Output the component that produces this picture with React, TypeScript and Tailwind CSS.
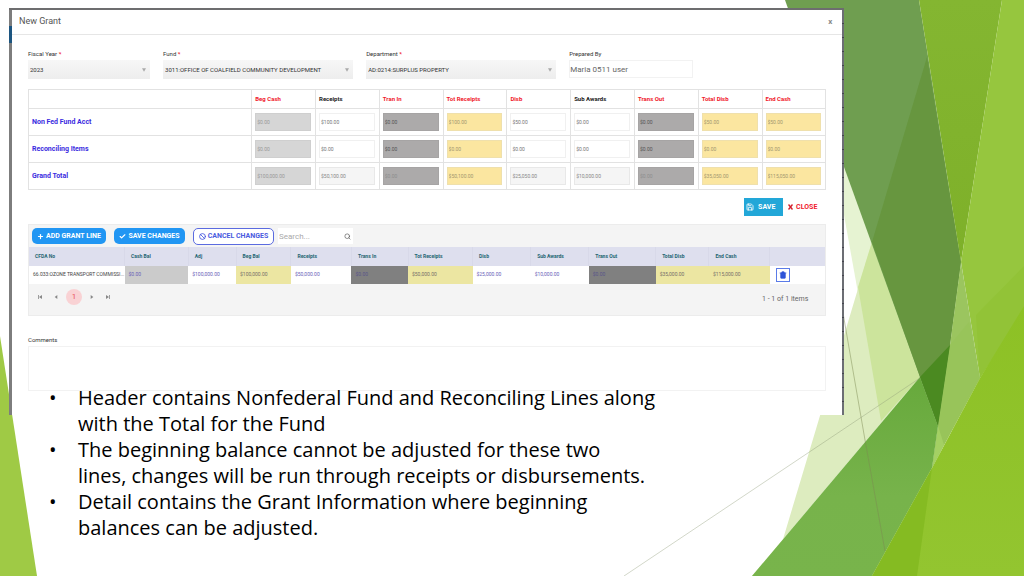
import React from "react";
import { Check, Plus, Ban, Save, Search, Trash2 } from "lucide-react";

const headerColumns = [
  { label: "Beg Cash", color: "text-[#f0202c]" },
  { label: "Receipts", color: "text-[#222]" },
  { label: "Tran In", color: "text-[#f0202c]" },
  { label: "Tot Receipts", color: "text-[#f0202c]" },
  { label: "Disb", color: "text-[#f0202c]" },
  { label: "Sub Awards", color: "text-[#222]" },
  { label: "Trans Out", color: "text-[#f0202c]" },
  { label: "Total Disb", color: "text-[#f0202c]" },
  { label: "End Cash", color: "text-[#f0202c]" },
];

const grey = "bg-[#d6d6d6] border-[#cfcfcf] text-[#999]";
const white = "bg-white border-[#f0f0f0] text-[#777]";
const dark = "bg-[#acaaaa] border-[#a6a4a4] text-[#555]";
const yellow = "bg-[#fbe6a0] border-[#efe0ac] text-[#a3986f]";
const pale = "bg-[#f5f5f5] border-[#e8e8e8] text-[#888]";
const faded = "bg-[#acaaaa] border-[#a6a4a4] text-[#8e8e8e]";

const lineTone = [grey, white, dark, yellow, white, white, dark, yellow, yellow];
const totalTone = [grey, pale, faded, yellow, pale, pale, faded, yellow, yellow];

const fundRows = [
  {
    name: "Non Fed Fund Acct",
    tone: lineTone,
    values: ["$0.00", "$100.00", "$0.00", "$100.00", "$50.00", "$0.00", "$0.00", "$50.00", "$50.00"],
  },
  {
    name: "Reconciling Items",
    tone: lineTone,
    values: ["$0.00", "$0.00", "$0.00", "$0.00", "$0.00", "$0.00", "$0.00", "$0.00", "$0.00"],
  },
  {
    name: "Grand Total",
    tone: totalTone,
    values: ["$100,000.00", "$50,100.00", "$0.00", "$50,100.00", "$25,050.00", "$10,000.00", "$0.00", "$35,050.00", "$115,050.00"],
  },
];

const detail = [
  { label: "CFDA No", value: "66.033:OZONE TRANSPORT COMMISSI...", width: "w-[12%]", cell: "text-[#444]" },
  { label: "Cash Bal", value: "$0.00", width: "w-[8%]", cell: "bg-[#cbcbcb] text-[#6a62b8]" },
  { label: "Adj", value: "$100,000.00", width: "w-[6%]", cell: "text-[#6a62b8]" },
  { label: "Beg Bal", value: "$100,000.00", width: "w-[6.9%]", cell: "bg-[#ece6a2] text-[#77706a]" },
  { label: "Receipts", value: "$50,000.00", width: "w-[7.6%]", cell: "text-[#6a62b8]" },
  { label: "Trans In", value: "$0.00", width: "w-[7.1%]", cell: "bg-[#808080] text-[#5a568a]" },
  { label: "Tot Receipts", value: "$50,000.00", width: "w-[8.1%]", cell: "bg-[#ece6a2] text-[#77706a]" },
  { label: "Disb", value: "$25,000.00", width: "w-[7.3%]", cell: "text-[#6a62b8]" },
  { label: "Sub Awards", value: "$10,000.00", width: "w-[7.3%]", cell: "text-[#6a62b8]" },
  { label: "Trans Out", value: "$0.00", width: "w-[8.4%]", cell: "bg-[#808080] text-[#5a568a]" },
  { label: "Total Disb", value: "$35,000.00", width: "w-[6.7%]", cell: "bg-[#ece6a2] text-[#77706a]" },
  { label: "End Cash", value: "$115,000.00", width: "w-[7.6%]", cell: "bg-[#ece6a2] text-[#77706a]" },
];

const notes = [
  "Header contains Nonfederal Fund and Reconciling Lines along\nwith the Total for the Fund",
  "The beginning balance cannot be adjusted for these two\nlines, changes will be run through receipts or disbursements.",
  "Detail contains the Grant Information where beginning\nbalances can be adjusted.",
];

function Backdrop() {
  return (
    <svg className="absolute inset-0 h-full w-full" viewBox="0 0 1024 576" preserveAspectRatio="none" aria-hidden="true">
      <defs>
        <linearGradient id="mid" x1="0" y1="0" x2="0" y2="1">
          <stop offset="0" stopColor="#67a93c" />
          <stop offset="0.6" stopColor="#77b34b" />
          <stop offset="1" stopColor="#78b44b" />
        </linearGradient>
        <linearGradient id="front" x1="0" y1="0" x2="0" y2="1">
          <stop offset="0" stopColor="#8dc125" />
          <stop offset="1" stopColor="#93c530" />
        </linearGradient>
        <linearGradient id="top" x1="0" y1="0" x2="0" y2="1">
          <stop offset="0" stopColor="#84b631" />
          <stop offset="1" stopColor="#7eb029" />
        </linearGradient>
      </defs>
      <polygon points="0,336 37,576 0,576" fill="#9fca45" />
      <polygon points="844,165 872,242 920,377 881,421 844,215" fill="#e6f3d2" />
      <polygon points="872,242 920,377 752,576 772,576" fill="#ddecbf" />
      <polygon points="872,242 920,377 881,421 858,287" fill="#cce49c" />
      <polygon points="785,0 919,0 961,262 950,345 938,426 920,377 844,167" fill="#6f9e50" />
      <polygon points="927,57 961,262 950,345 938,426 920,377 872,242" fill="#67963f" />
      <polygon points="919,0 1002,0 961,262" fill="url(#top)" />
      <polygon points="1002,0 1024,0 1024,310 980,378 961,262" fill="#96c63e" />
      <polygon points="976,315 1024,266 1024,310 980,378" fill="#92c337" />
      <polygon points="961,262 980,378 944,445 932,468 938,426 950,345" fill="#9bc55f" />
      <polygon points="950,345 969,322 980,378 944,445 938,426" fill="#98c45a" />
      <polygon points="938,426 944,445 932,468" fill="#a4d064" />
      <polygon points="752,576 920,377 938,426 932,468 872,576" fill="url(#mid)" />
      <polygon points="920,377 950,345 938,426" fill="#4b8a21" />
      <polygon points="872,576 932,468 980,378 1024,306 1024,576" fill="url(#front)" />
      <polygon points="872,576 932,468 917,576" fill="#85bb22" />
      <path d="M624 576 920 378" fill="none" stroke="#8f9a78" strokeOpacity="0.5" strokeWidth="0.8" />
      <path d="M843 313 865 440 885 551" fill="none" stroke="#7c8a52" strokeOpacity="0.6" strokeWidth="0.8" />
    </svg>
  );
}

function Picker({ id, label, value }: { id: string; label: string; value: string }) {
  return (
    <div className="flex flex-col">
      <label htmlFor={id} className="text-[6px] leading-[12px] text-[#333]">
        {label} <span className="font-bold text-[#f0202c]">*</span>
      </label>
      <div className="relative">
        <select
          id={id}
          defaultValue={value}
          className="block h-[19px] w-full appearance-none truncate bg-linear-to-b from-[#f7f7f7] to-[#ededed] pr-3 pl-[2px] text-[6px] text-[#333]"
        >
          <option>{value}</option>
        </select>
        <svg viewBox="0 0 6 5" className="pointer-events-none absolute top-[8px] right-1 h-[4px] w-[4px]" aria-hidden="true">
          <path d="M0 0h6L3 5z" fill="#aaa" />
        </svg>
      </div>
    </div>
  );
}

function PagerButton({ label, path }: { label: string; path: string }) {
  return (
    <button type="button" aria-label={label} className="flex size-4 items-center justify-center">
      <svg viewBox="0 0 6 6" className="size-[4px]" aria-hidden="true">
        <path d={path} fill="#888" />
      </svg>
    </button>
  );
}

export default function App() {
  return (
    <main className="relative min-h-screen overflow-hidden bg-white font-['Trebuchet_MS','Open_Sans',sans-serif]">
      <Backdrop />
      <div className="relative pt-2 pl-[9px]">
        <section className="flex w-[82.3%] border-t-2 border-[#6d6d6f] bg-white font-[Roboto,sans-serif]">
          <div className="flex w-[3px] shrink-0 flex-col bg-[#7d7d7d] pt-4">
            <div className="h-[17px] bg-[#1c5580]" />
          </div>
          <div className="min-w-0 flex-1 pb-6">
            <header className="flex h-[25px] items-center justify-between border-b border-[#e6e6e6] pr-[10px] pl-[7px]">
              <h1 className="text-[9px] text-[#555]">New Grant</h1>
              <button type="button" aria-label="Close dialog" className="text-[8px] font-bold text-[#888]">
                x
              </button>
            </header>

            <div className="px-4 pt-[13px]">
              <form className="grid grid-cols-[122fr_190fr_190fr_124fr_120fr] gap-x-[13px]">
                <Picker id="year" label="Fiscal Year" value="2023" />
                <Picker id="fund" label="Fund" value="3011:OFFICE OF COALFIELD COMMUNITY DEVELOPMENT" />
                <Picker id="dept" label="Department" value="AD:0214:SURPLUS PROPERTY" />
                <div className="flex flex-col">
                  <label htmlFor="prepared" className="text-[6px] leading-[12px] text-[#333]">
                    Prepared By
                  </label>
                  <input
                    id="prepared"
                    defaultValue="Maria 0511 user"
                    className="h-[18px] w-full border border-[#f2f2f2] text-[8px] text-[#666]"
                  />
                </div>
              </form>

              <table className="mt-[10px] w-full table-fixed border-collapse border border-[#e2e2e2] text-left">
                <thead>
                  <tr className="h-[19px]">
                    <th className="w-[28%]" aria-label="Line" />
                    {headerColumns.map((c) => (
                      <th key={c.label} className={`border border-[#e2e2e2] px-[3px] text-[6px] leading-[10px] font-bold ${c.color}`}>
                        {c.label}
                      </th>
                    ))}
                  </tr>
                </thead>
                <tbody>
                  {fundRows.map((row) => (
                    <tr key={row.name} className="h-[27px] border-t border-[#e2e2e2]">
                      <th className="pl-[3px] text-[7px] font-bold text-[#3a2be0]">{row.name}</th>
                      {row.values.map((v, i) => (
                        <td key={i} className="border border-[#e2e2e2] pr-1 pl-[3px]">
                          <input
                            aria-label={`${row.name} ${headerColumns[i].label}`}
                            defaultValue={v}
                            className={`block h-[18px] w-full border px-[1px] text-[5px] ${row.tone[i]}`}
                          />
                        </td>
                      ))}
                    </tr>
                  ))}
                </tbody>
              </table>

              <div className="mt-2 flex justify-end gap-[5px] pr-[9px]">
                <button type="button" className="flex h-[18px] w-[39px] items-center gap-1 bg-[#22a7d8] pl-[2px] text-[7px] font-bold text-white">
                  <Save className="size-[8px]" strokeWidth={2.5} />
                  SAVE
                </button>
                <button type="button" className="flex h-[18px] items-center gap-[3px] text-[7px] font-bold text-[#f0202c]">
                  <svg viewBox="0 0 5 6" className="h-[6px] w-[5px]" aria-hidden="true">
                    <path d="M.5.5 4.5 5.5M4.500.5.5 5.5" stroke="#d3202c" strokeWidth="1.4" fill="none" />
                  </svg>
                  CLOSE
                </button>
              </div>

              <div className="mt-2 border border-[#ececec] bg-[#f4f4f4]">
                <div className="flex h-[22px] items-center pl-[3px]">
                  <button type="button" className="flex h-4 w-[74px] items-center justify-center gap-[2px] rounded-[5px] bg-[#2196f3] text-[7px] font-bold text-white">
                    <Plus className="size-[7px]" strokeWidth={4} />
                    ADD GRANT LINE
                  </button>
                  <button type="button" className="ml-2 flex h-4 w-[71px] items-center justify-center gap-[2px] rounded-[5px] bg-[#2196f3] text-[7px] font-bold text-white">
                    <Check className="size-[7px]" strokeWidth={4} />
                    SAVE CHANGES
                  </button>
                  <button type="button" className="ml-2 flex h-[17px] w-[81px] items-center justify-center gap-[2px] rounded-[5px] border border-[#5b6be0] bg-white text-[7px] font-bold text-[#4a5be0]">
                    <Ban className="size-[7px]" strokeWidth={3} />
                    CANCEL CHANGES
                  </button>
                  <label className="ml-1 flex h-4 w-[75px] items-center bg-white pr-[2px]">
                    <input
                      type="text"
                      aria-label="Search"
                      placeholder="Search..."
                      className="h-full min-w-0 flex-1 pl-[1px] text-[8px] placeholder:text-[#aaa]"
                    />
                    <Search className="size-[7px] text-[#444]" />
                  </label>
                </div>
                <table className="w-full table-fixed border-collapse text-left">
                  <thead>
                    <tr className="h-[19px] bg-[#dedfee]">
                      {detail.map((c) => (
                        <th key={c.label} className={`${c.width} border-r border-[#d8d9e9] pl-[6px] text-[5px] font-bold whitespace-nowrap text-[#1e6673]`}>
                          {c.label}
                        </th>
                      ))}
                      <th aria-label="Actions" />
                    </tr>
                  </thead>
                  <tbody>
                    <tr className="h-[18px] bg-white">
                      {detail.map((c) => (
                        <td key={c.label} className={`pl-[4px] text-[5px] whitespace-nowrap ${c.cell}`}>
                          {c.value}
                        </td>
                      ))}
                      <td className="pl-[6px]">
                        <button type="button" aria-label="Delete line" className="flex h-[14px] w-[14px] items-center justify-center border border-[#5b7be8] bg-white text-[#2f55d8]">
                          <Trash2 className="size-[8px] fill-current" />
                        </button>
                      </td>
                    </tr>
                  </tbody>
                </table>
                <div className="flex h-[31px] items-start justify-between pt-[5px] pr-[17px] pl-[3px]">
                  <nav aria-label="Pages" className="flex items-center">
                    <PagerButton label="First page" path="M0 0h1.200v6H0zM6 0v6L1.500 3z" />
                    <PagerButton label="Previous page" path="M5 0v6L1 3z" />
                    <button type="button" className="mx-[2px] flex size-4 items-center justify-center rounded-full bg-[#f9d2d4] text-[8px] text-[#e8545c]">
                      1
                    </button>
                    <PagerButton label="Next page" path="M1 0v6L5 3z" />
                    <PagerButton label="Last page" path="M4.800 0H6v6H4.800zM0 0v6L4.500 3z" />
                  </nav>
                  <p className="pt-1 text-[7px] leading-[12px] text-[#666]">1 - 1 of 1 items</p>
                </div>
              </div>

              <label htmlFor="comments" className="mt-[18px] block text-[6px] leading-[12px] text-[#333]">
                Comments
              </label>
              <textarea id="comments" className="block h-[45px] w-full resize-none border border-[#f2f2f2]" />
            </div>
          </div>
          <div className="w-[2px] shrink-0 bg-[repeating-linear-gradient(to_bottom,#6c6e74_0px,#6c6e74_13px,#45454f_13px,#45454f_14px)]" />
        </section>

        <ul className="-mt-[30px] ml-10 text-[20px] leading-[26px] text-black">
          {notes.map((n) => (
            <li key={n} className="flex">
              <span className="w-[29px] shrink-0">•</span>
              <span className="whitespace-pre-line">{n}</span>
            </li>
          ))}
        </ul>
      </div>
    </main>
  );
}
